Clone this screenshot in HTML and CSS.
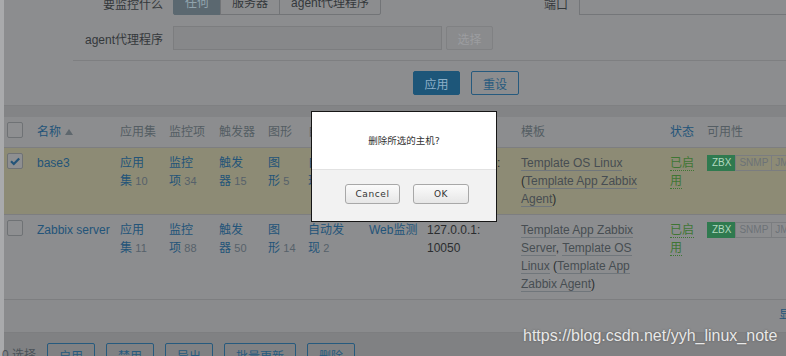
FILE: index.html
```html
<!DOCTYPE html>
<html>
<head>
	<meta charset="utf-8">
	<title>主机</title>
	<link rel="stylesheet" href="styles.css">
</head>
<body>
<div class="page">
	<div class="filter">
		<div class="filter-grid">
			<div class="filter-col">
				<div class="form-row">
					<label class="form-label">要监控什么</label>
					<div class="seg">
						<span class="seg-item active">任何</span>
						<span class="seg-item">服务器</span>
						<span class="seg-item">agent代理程序</span>
					</div>
				</div>
				<div class="form-row">
					<label class="form-label">agent代理程序</label>
					<input type="text" class="input proxy" disabled>
					<button class="btn-alt" disabled>选择</button>
				</div>
			</div>
			<div class="filter-col right">
				<div class="form-row">
					<label class="form-label short">端口</label>
					<input type="text" class="input port">
				</div>
			</div>
		</div>
		<div class="filter-actions">
			<button class="btn-main">应用</button>
			<button class="btn-outline">重设</button>
		</div>
	</div>

	<table class="list" cellspacing="0">
		<colgroup>
			<col style="width:28px">
			<col style="width:83px">
			<col style="width:49px">
			<col style="width:50px">
			<col style="width:49px">
			<col style="width:40px">
			<col style="width:61px">
			<col style="width:58px">
			<col style="width:94px">
			<col style="width:149px">
			<col style="width:37px">
			<col style="width:160px">
			<col>
		</colgroup>
		<thead>
			<tr>
				<th class="cell-check"><span class="checkbox"></span></th>
				<th><a href="#" class="link">名称</a> <span class="arrow-up"></span></th>
				<th>应用集</th>
				<th>监控项</th>
				<th>触发器</th>
				<th>图形</th>
				<th>自动发现</th>
				<th>Web监测</th>
				<th>接口</th>
				<th class="cell-templates">模板</th>
				<th><a href="#" class="link">状态</a></th>
				<th>可用性</th>
				<th>agent 加密</th>
			</tr>
		</thead>
		<tbody>
			<tr class="selected">
				<td class="cell-check">
					<span class="checkbox checked">
						<svg width="14" height="14" viewBox="0 0 14 14"><path d="M3 7.2 L5.8 10 L11.2 4.4" fill="none" stroke="#235479" stroke-width="2.2"/></svg>
					</span>
				</td>
				<td class="nowrap"><a href="#" class="link">base3</a></td>
				<td><a href="#" class="link">应用<br>集</a> <span class="count">10</span></td>
				<td><a href="#" class="link">监控<br>项</a> <span class="count">34</span></td>
				<td><a href="#" class="link">触发<br>器</a> <span class="count">15</span></td>
				<td><a href="#" class="link">图<br>形</a> <span class="count">5</span></td>
				<td><a href="#" class="link">自动发<br>现</a></td>
				<td class="nowrap"><a href="#" class="link">Web监测</a></td>
				<td class="dark">192.168.1.10:<br>10050</td>
				<td class="cell-templates"><a href="#" class="link-alt">Template OS Linux</a> (<a href="#" class="link-alt">Template App Zabbix Agent</a>)</td>
				<td><a href="#" class="status">已启用</a></td>
				<td>
					<div class="badges">
						<span class="badge on">ZBX</span><span class="badge">SNMP</span><span class="badge">JMX</span><span class="badge">IPMI</span>
					</div>
				</td>
				<td></td>
			</tr>
			<tr>
				<td class="cell-check"><span class="checkbox"></span></td>
				<td class="nowrap"><a href="#" class="link">Zabbix server</a></td>
				<td><a href="#" class="link">应用<br>集</a> <span class="count">11</span></td>
				<td><a href="#" class="link">监控<br>项</a> <span class="count">88</span></td>
				<td><a href="#" class="link">触发<br>器</a> <span class="count">50</span></td>
				<td><a href="#" class="link">图<br>形</a> <span class="count">14</span></td>
				<td><a href="#" class="link">自动发<br>现</a> <span class="count">2</span></td>
				<td class="nowrap"><a href="#" class="link">Web监测</a></td>
				<td class="dark">127.0.0.1:<br>10050</td>
				<td class="cell-templates"><a href="#" class="link-alt">Template App Zabbix Server</a>, <a href="#" class="link-alt">Template OS Linux</a> (<a href="#" class="link-alt">Template App Zabbix Agent</a>)</td>
				<td><a href="#" class="status">已启用</a></td>
				<td>
					<div class="badges">
						<span class="badge on">ZBX</span><span class="badge">SNMP</span><span class="badge">JMX</span><span class="badge">IPMI</span>
					</div>
				</td>
				<td></td>
			</tr>
		</tbody>
	</table>
	<div class="paging">显示 已自动发现的 2中的2</div>

	<div class="action-bar">
		<span class="selected-count">0 选择</span>
		<button class="btn-outline">启用</button>
		<button class="btn-outline">禁用</button>
		<button class="btn-outline">导出</button>
		<button class="btn-outline">批量更新</button>
		<button class="btn-outline">删除</button>
	</div>
</div>

<div class="watermark">https://blog.csdn.net/yyh_linux_note</div>

<div class="dialog">
	<div class="dialog-body">删除所选的主机?</div>
	<div class="dialog-buttons">
		<button class="dlg-btn cancel">Cancel</button>
		<button class="dlg-btn">OK</button>
	</div>
</div>
</body>
</html>
```

FILE: styles.css
```css
body {
  margin: 0;
  height: 356px;
  overflow: hidden;
  background-color: #838486;
  font-family: "Liberation Sans", "Noto Sans CJK SC", sans-serif;
  font-size: 12px;
  color: #2a2c2e;
}

.page {
  width: 930px;
  border-left: 4px solid #a9aaac;
  min-height: 356px;
  background-color: #838486;
}

button {
  font-family: "Liberation Sans", "Noto Sans CJK SC", sans-serif;
  font-size: 12px;
  height: 24px;
  padding: 0 11px;
  border-radius: 2px;
  background: transparent;
  cursor: pointer;
}

a {
  text-decoration: none;
}

/* filter */
.filter {
  background-color: #8c8d8f;
  margin-top: -9px;
  padding-bottom: 10px;
  border-bottom: 1px solid #7f8082;
}

.filter-grid {
  display: flex;
}

.filter-col {
  width: 490px;
  display: flex;
  flex-direction: column;
  gap: 11px;
}

.filter-col.right {
  width: auto;
  flex: 1;
}

.form-row {
  display: flex;
  align-items: center;
  gap: 10px;
  height: 24px;
}

.form-label {
  width: 159px;
  text-align: right;
  color: #34383b;
  flex-shrink: 0;
}

.form-label.short {
  width: 74px;
  margin-right: 1px;
}

.seg {
  display: flex;
}

.seg-item {
  height: 22px;
  line-height: 22px;
  padding: 0 11px;
  border: 1px solid #727477;
  margin-left: -1px;
  color: #34383b;
}

.seg-item:first-child {
  margin-left: 0;
  border-radius: 2px 0 0 2px;
}

.seg-item:last-child {
  border-radius: 0 2px 2px 0;
}

.seg-item.active {
  background-color: #5b6870;
  border-color: #5b6870;
  color: #91a3ad;
}

.input {
  height: 24px;
  box-sizing: border-box;
  border: 1px solid #747679;
  background-color: #8c8d8f;
  padding: 0 5px;
}

.input.proxy {
  width: 269px;
  background-color: #87888a;
  border-color: #7c7d7f;
}

.input.port {
  flex: 1;
}

.btn-alt {
  width: 47px;
  margin-left: -6px;
  padding: 0;
  border: 1px solid #808183;
  background-color: #8a8b8d;
  color: #9c9da0;
}

.filter-actions {
  margin: 10px 0 0 69px;
  padding: 10px 0 0 340px;
  border-top: 1px solid #7e7f81;
  display: flex;
  gap: 11px;
}

.btn-main {
  width: 47px;
  padding: 0;
  border: 1px solid #1d5679;
  background-color: #1d5679;
  color: #8db0c8;
}

.btn-outline {
  min-width: 47px;
  padding: 0 11px;
  border: 1px solid #265a7e;
  color: #265a7e;
}

/* table */
.list {
  width: 926px;
  table-layout: fixed;
  margin-top: 11px;
  background-color: #8c8d8f;
}

th,
td {
  text-align: left;
  vertical-align: top;
  padding: 6px 5px;
  line-height: 18px;
  border-bottom: 1px solid #7d7e80;
}

th {
  font-weight: normal;
  color: #545d63;
  white-space: nowrap;
}

.cell-check {
  padding-left: 3px;
  padding-right: 0;
}

.cell-templates {
  padding-right: 14px;
}

.nowrap {
  white-space: nowrap;
}

tr.selected td {
  background-color: #8d8b75;
}

.checkbox {
  display: block;
  width: 14px;
  height: 14px;
  margin-top: -1px;
  border: 1px solid #6f7275;
  border-radius: 2px;
  background-color: #8e8f91;
}

.checkbox svg {
  display: block;
}

.link {
  color: #235479;
}

.arrow-up {
  display: inline-block;
  width: 0;
  height: 0;
  margin-left: 1px;
  border-left: 4px solid transparent;
  border-right: 4px solid transparent;
  border-bottom: 6px solid #5e676d;
  vertical-align: 1px;
}

.count {
  font-size: 11px;
  color: #56616a;
}

.dark {
  color: #2b2d2f;
}

.link-alt {
  color: #474d52;
  border-bottom: 1px solid #70767b;
}

.status {
  color: #3f7634;
  border-bottom: 1px dotted #3f7634;
}

.badges {
  display: flex;
  padding-top: 1px;
}

.badge {
  height: 14px;
  line-height: 14px;
  padding: 0 3px;
  font-size: 10px;
  border: 1px solid #7b7d80;
  margin-left: -1px;
  color: #6c7277;
}

.badge.on {
  margin-left: 0;
  padding: 0 4px;
  background-color: #2f7a4f;
  border-color: #2f7a4f;
  color: #b1d8bf;
}

.paging {
  height: 32px;
  line-height: 30px;
  background-color: #8a8b8d;
  text-align: right;
  padding-right: 15px;
  color: #235479;
  border-bottom: 1px solid #7d7e80;
}

.action-bar {
  background-color: #808183;
  padding-top: 10px;
  height: 40px;
  display: flex;
  align-items: flex-start;
  gap: 11px;
}

.selected-count {
  margin-left: -2px;
  line-height: 24px;
  color: #4a5258;
  width: 34px;
}

/* overlays */
.watermark {
  position: absolute;
  left: 523px;
  top: 327px;
  font-family: "Liberation Sans", sans-serif;
  font-size: 16px;
  color: #e8e8e8;
  text-shadow: 0 0 2px #555;
}

.dialog {
  position: absolute;
  left: 311px;
  top: 111px;
  width: 184px;
  height: 109px;
  border: 1px solid #161616;
  background-color: #f2f2f2;
  font-family: "DejaVu Sans", "Noto Sans CJK SC", sans-serif;
}

.dialog-body {
  height: 57px;
  line-height: 58px;
  background-color: #fff;
  border-bottom: 1px solid #e2e2e2;
  text-align: center;
  font-size: 9.5px;
  color: #333;
}

.dialog-buttons {
  display: flex;
  gap: 13px;
  padding: 14px 0 0 33px;
}

.dlg-btn {
  width: 56px;
  height: 20px;
  padding: 0;
  font-family: "DejaVu Sans", sans-serif;
  font-size: 9px;
  letter-spacing: 0.6px;
  color: #333;
  border: 1px solid #a8a8a8;
  border-radius: 3px;
  background: linear-gradient(#fbfbfb, #e6e6e6);
}

.dlg-btn.cancel {
  width: 55px;
}
```
